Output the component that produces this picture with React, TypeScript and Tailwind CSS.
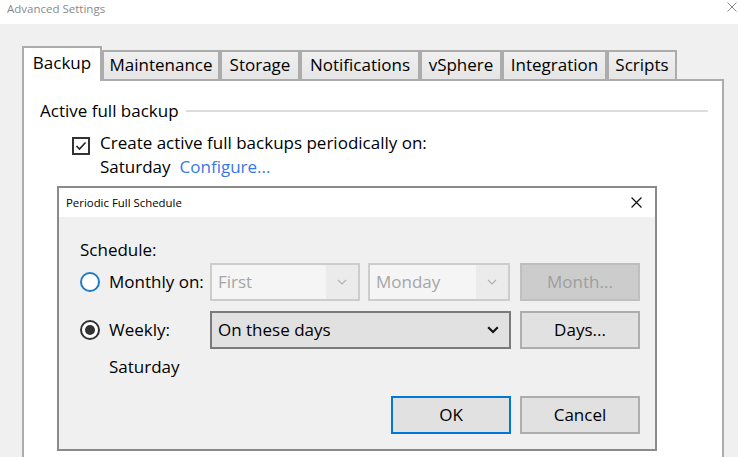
import React from "react";

const XIcon = ({ size = 10, color = "#000", sw = 1 }: { size?: number; color?: string; sw?: number }) => (
  <svg width={size} height={size} viewBox="0 0 10 10">
    <path d="M0.5 0.5 L9.5 9.5 M9.5 0.5 L0.5 9.5" stroke={color} strokeWidth={sw} fill="none" />
  </svg>
);

const Chevron = ({ color, sw = 1.2, w = 10 }: { color: string; sw?: number; w?: number }) => (
  <svg width={w} height={w * 0.6} viewBox="0 0 10 6">
    <path d="M1 1 L5 5 L9 1" stroke={color} strokeWidth={sw} fill="none" />
  </svg>
);

const Tab = ({ label, w, selected }: { label: string; w: number; selected?: boolean }) =>
  selected ? (
    <div
      className="relative z-10 h-[35px] bg-white border-2 border-b-0 border-[#acacac] flex justify-center pt-[5px] leading-[20px]"
      style={{ width: w }}
    >
      {label}
    </div>
  ) : (
    <div
      className="mt-[4px] h-[29px] bg-gradient-to-b from-[#f0f0f0] to-[#e5e5e5] border-2 border-b-0 border-[#acacac] flex justify-center pt-[3px] leading-[20px]"
      style={{ width: w }}
    >
      {label}
    </div>
  );

const DisabledSelect = ({ label, w }: { label: string; w: number }) => (
  <div className="h-[38px] border-2 border-[#cccccc] bg-[#f5f5f5] flex items-stretch" style={{ width: w }}>
    <div className="flex-1 flex items-center pl-[6px] text-[#a6a6a6]">{label}</div>
    <div className="w-[32px] bg-[#ebebeb] flex items-center justify-center">
      <Chevron color="#b0b0b0" sw={1.1} w={10} />
    </div>
  </div>
);

export default function App() {
  return (
    <div className="w-[738px] h-[457px] overflow-hidden relative bg-[#f0f0f0] text-[17px] leading-[24px] text-black font-['Open_Sans',sans-serif]">
      {/* window title bar */}
      <div className="h-[24px] bg-white flex items-start justify-between pl-[7px] pr-[1px]">
        <span className="mt-[1px] text-[11.5px] leading-[16px] text-[#8a8a8a]">Advanced Settings</span>
        <div className="mt-[2px]">
          <XIcon size={10} color="#7a7a7a" sw={0.9} />
        </div>
      </div>

      <div className="pl-[22px] pr-[14px] pt-[22px]">
        {/* tabs */}
        <div className="flex items-start h-[33px]">
          <Tab label="Backup" w={80} selected />
          <Tab label="Maintenance" w={118} />
          <Tab label="Storage" w={80} />
          <Tab label="Notifications" w={120} />
          <Tab label="vSphere" w={82} />
          <Tab label="Integration" w={105} />
          <Tab label="Scripts" w={70} />
        </div>
        {/* panel */}
        <div className="h-[420px] bg-white border-2 border-b-0 border-[#acacac] pl-[16px] pr-[14px] pt-[18px]">
          <div className="flex items-center">
            <span>Active full backup</span>
            <div className="flex-1 h-[2px] bg-[#dcdcdc] ml-[7px]" />
          </div>
          <div className="flex items-start mt-[8px] pl-[32px]">
            <div className="mt-[6px] w-[18px] h-[18px] border-2 border-[#333] flex items-center justify-center">
              <svg width="12" height="10" viewBox="0 0 12 10">
                <path d="M1.5 5 L4.5 8 L10.5 1.5" stroke="#222" strokeWidth="1.6" fill="none" />
              </svg>
            </div>
            <span className="ml-[10px]">Create active full backups periodically on:</span>
          </div>
          <div className="flex items-center pl-[60px] gap-[9px]">
            <span>Saturday</span>
            <span className="text-[#3a78e6]">Configure...</span>
          </div>
        </div>
      </div>

      {/* Periodic Full Schedule dialog */}
      <div className="absolute left-[57px] top-[186px] w-[600px] h-[265px] border-2 border-[#8a8a8a] flex flex-col bg-[#f0f0f0]">
        <div className="h-[29px] bg-white flex items-center justify-between pl-[7px] pr-[13px]">
          <span className="text-[11.4px] leading-[16px]">Periodic Full Schedule</span>
          <XIcon size={11} color="#111" sw={1.1} />
        </div>
        <div className="flex-1 pl-[21px] pr-[15px] pt-[21px]">
          <div>Schedule:</div>
          <div className="mt-[1px] flex items-center h-[38px]">
            <div className="w-[130px] flex items-center">
              <div className="w-[20px] h-[20px] rounded-full border-2 border-[#1f7cc4] bg-white" />
              <span className="ml-[9px]">Monthly on:</span>
            </div>
            <DisabledSelect label="First" w={150} />
            <div className="w-[8px]" />
            <DisabledSelect label="Monday" w={142} />
            <div className="w-[10px]" />
            <div className="w-[120px] h-[38px] border-2 border-[#bfbfbf] bg-[#cccccc] flex items-center justify-center text-[#9e9e9e]">
              Month...
            </div>
          </div>
          <div className="mt-[10px] flex items-center h-[38px]">
            <div className="w-[130px] flex items-center">
              <div className="w-[20px] h-[20px] rounded-full border-2 border-[#333] bg-white flex items-center justify-center">
                <div className="w-[10px] h-[10px] rounded-full bg-[#333]" />
              </div>
              <span className="ml-[9px]">Weekly:</span>
            </div>
            <div className="w-[301px] h-[38px] border-2 border-[#7a7a7a] bg-[#e1e1e1] flex items-center justify-between pl-[6px] pr-[10px]">
              <span>On these days</span>
              <Chevron color="#111" sw={1.8} w={12} />
            </div>
            <div className="w-[9px]" />
            <div className="w-[120px] h-[38px] border-2 border-[#adadad] bg-[#e1e1e1] flex items-center justify-center">
              Days...
            </div>
          </div>
          <div className="mt-[6px] pl-[29px]">Saturday</div>
          <div className="mt-[17px] flex justify-end gap-[9px]">
            <div className="w-[120px] h-[38px] border-2 border-[#0078d7] bg-[#e1e1e1] flex items-center justify-center">
              OK
            </div>
            <div className="w-[120px] h-[38px] border-2 border-[#adadad] bg-[#e1e1e1] flex items-center justify-center">
              Cancel
            </div>
          </div>
        </div>
      </div>
    </div>
  );
}
